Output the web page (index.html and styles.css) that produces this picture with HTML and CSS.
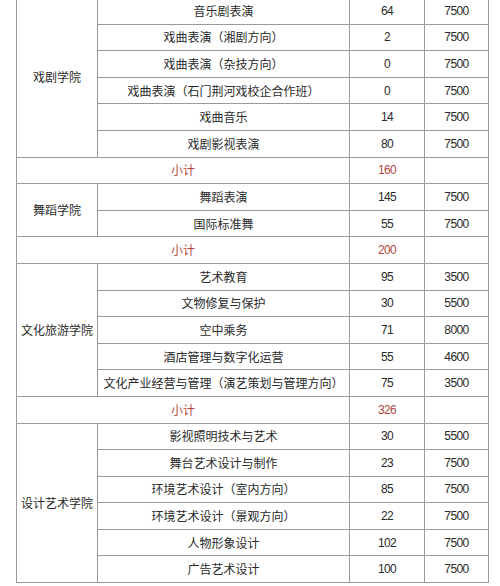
FILE: index.html
```html
<!DOCTYPE html>
<html lang="zh">
<head>
<meta charset="utf-8">
<link rel="stylesheet" href="styles.css">
</head>
<body>
<table class="plan">
  <colgroup>
    <col class="c-college"><col class="c-major"><col class="c-num"><col class="c-fee">
  </colgroup>
  <tbody>
    <tr><td rowspan="6" class="college">戏剧学院</td><td>音乐剧表演</td><td class="num">64</td><td class="num">7500</td></tr>
    <tr><td>戏曲表演（湘剧方向）</td><td class="num">2</td><td class="num">7500</td></tr>
    <tr><td>戏曲表演（杂技方向）</td><td class="num">0</td><td class="num">7500</td></tr>
    <tr><td>戏曲表演（石门荆河戏校企合作班）</td><td class="num">0</td><td class="num">7500</td></tr>
    <tr><td>戏曲音乐</td><td class="num">14</td><td class="num">7500</td></tr>
    <tr><td>戏剧影视表演</td><td class="num">80</td><td class="num">7500</td></tr>
    <tr class="sub"><td colspan="2">小计</td><td class="num">160</td><td></td></tr>
    <tr><td rowspan="2" class="college">舞蹈学院</td><td>舞蹈表演</td><td class="num">145</td><td class="num">7500</td></tr>
    <tr><td>国际标准舞</td><td class="num">55</td><td class="num">7500</td></tr>
    <tr class="sub"><td colspan="2">小计</td><td class="num">200</td><td></td></tr>
    <tr><td rowspan="5" class="college">文化旅游学院</td><td>艺术教育</td><td class="num">95</td><td class="num">3500</td></tr>
    <tr><td>文物修复与保护</td><td class="num">30</td><td class="num">5500</td></tr>
    <tr><td>空中乘务</td><td class="num">71</td><td class="num">8000</td></tr>
    <tr><td>酒店管理与数字化运营</td><td class="num">55</td><td class="num">4600</td></tr>
    <tr><td>文化产业经营与管理（演艺策划与管理方向）</td><td class="num">75</td><td class="num">3500</td></tr>
    <tr class="sub"><td colspan="2">小计</td><td class="num">326</td><td></td></tr>
    <tr><td rowspan="6" class="college">设计艺术学院</td><td>影视照明技术与艺术</td><td class="num">30</td><td class="num">5500</td></tr>
    <tr><td>舞台艺术设计与制作</td><td class="num">23</td><td class="num">7500</td></tr>
    <tr><td>环境艺术设计（室内方向）</td><td class="num">85</td><td class="num">7500</td></tr>
    <tr><td>环境艺术设计（景观方向）</td><td class="num">22</td><td class="num">7500</td></tr>
    <tr><td>人物形象设计</td><td class="num">102</td><td class="num">7500</td></tr>
    <tr><td>广告艺术设计</td><td class="num">100</td><td class="num">7500</td></tr>
  </tbody>
</table>
</body>
</html>
```

FILE: styles.css
```css
html, body {
  margin: 0;
  padding: 0;
  background: #ffffff;
}
body {
  font-family: "Noto Sans CJK SC", "Noto Sans", sans-serif;
  color: #2a2a2a;
}
.plan {
  border-collapse: collapse;
  table-layout: fixed;
  width: 472px;
  margin: -3px 0 0 16px;
}
.c-college { width: 81px; }
.c-major { width: 252px; }
.c-num { width: 75px; }
.c-fee { width: 64px; }
.plan tr { height: 26.6px; }
.plan td {
  border: 1px solid #9a9a9a;
  padding: 0;
  text-align: center;
  vertical-align: middle;
  font-size: 12px;
  line-height: 14px;
  white-space: nowrap;
}
.plan td.num {
  font-family: "Liberation Sans", Arial, sans-serif;
  font-size: 12px;
  letter-spacing: -0.6px;
}
.plan tr.sub td {
  color: #b04840;
}
```
